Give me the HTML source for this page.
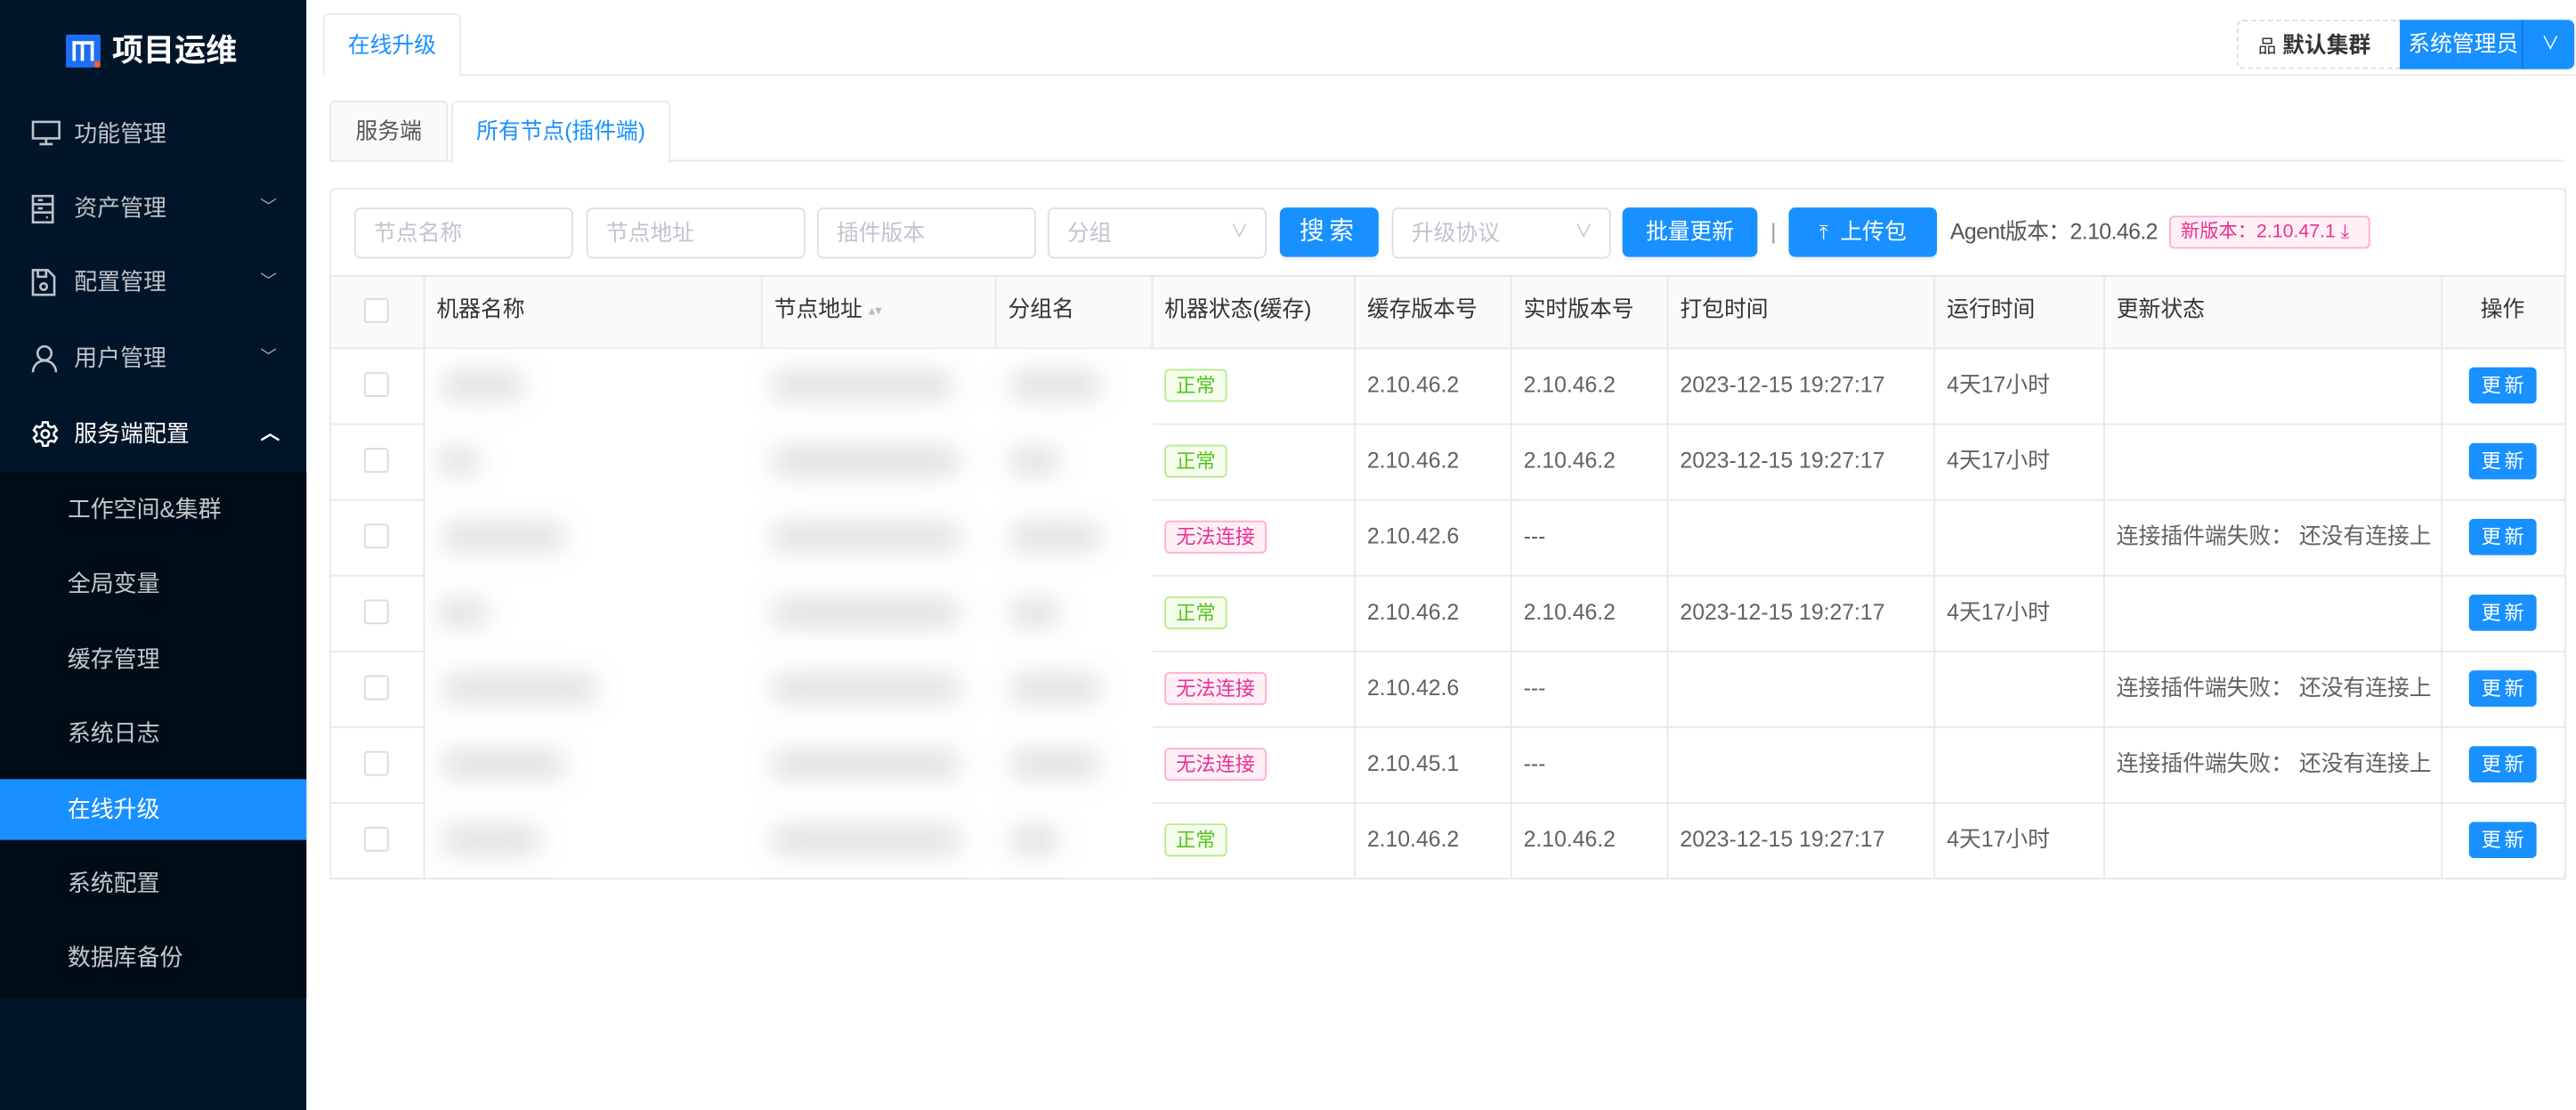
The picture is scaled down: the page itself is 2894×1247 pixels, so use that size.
<!DOCTYPE html>
<html><head><meta charset="utf-8"><style>
*{box-sizing:border-box;margin:0;padding:0}
html,body{width:2894px;height:1246px;overflow:hidden;background:#fff}
#w{position:absolute;left:0;top:0;width:1564px;height:674px;transform:scale(1.8504);transform-origin:0 0;font-family:"Liberation Sans","Noto Sans CJK SC",sans-serif;font-size:13.4px;color:#606266}
.a{position:absolute}
.side{left:0;top:0;width:186px;height:674px;background:#001529}
.mi{position:absolute;left:0;width:186px;height:45px;line-height:45px;color:#bfc4ca;font-size:14px}
.mi .t{position:absolute;left:45px}
.mi svg{position:absolute;left:19px;top:14px}
.mi .ch{position:absolute;left:158px;top:0;color:#aab;font-size:10px}
.sub{position:absolute;left:0;width:186px;height:45.5px;line-height:45px;color:#c5c9ce;padding-left:41px;background:#000c17;font-size:14px}
.inp{position:absolute;top:126px;height:31px;border:1px solid #dcdfe6;border-radius:4px;color:#c0c4cc;line-height:29px;padding-left:11px;background:#fff}
.btn{position:absolute;top:126px;height:30px;background:#1890ff;color:#fff;border-radius:4px;text-align:center;line-height:30px;box-shadow:0 2px 0 rgba(0,0,0,.05)}
.hl{position:absolute;height:1px;background:#e8e8e8}
.vl{position:absolute;width:1px;background:#e8e8e8}
.c{position:absolute;line-height:20px}
.tag{position:absolute;height:20px;line-height:18px;font-size:12px;border-radius:3px;padding:0 6px}
.ok{color:#52c41a;background:#f6ffed;border:1px solid #b7eb8f}
.bad{color:#eb2f96;background:#fff0f6;border:1px solid #ffadd2}
.cb{position:absolute;left:221px;width:15px;height:15px;border:1px solid #d9d9d9;border-radius:2px;background:#fff}
.up{position:absolute;left:1499px;width:41px;height:22px;background:#1890ff;color:#fff;border-radius:3px;font-size:12px;line-height:22px;text-align:center;letter-spacing:2px;padding-left:2px}
.blob{position:absolute;background:#d8d8d8;filter:blur(8px);border-radius:10px}
</style></head><body><div id="w">
<div class="a side">
 <div class="a" style="left:40px;top:21px;width:21px;height:20px;background:#1d6ef5;border-radius:1px"></div>
 <div class="a" style="left:44px;top:25px;width:13px;height:12px;border:2px solid #fff;border-bottom:none"></div>
 <div class="a" style="left:49px;top:27px;width:2px;height:10px;background:#fff"></div>
 <div class="a" style="left:57px;top:37px;width:4px;height:4px;background:#ff5a1f;border-radius:50%"></div>
 <div class="a" style="left:68px;top:19px;color:#fff;font-size:19px;font-weight:bold;line-height:26px">项目运维</div>
 <div class="mi" style="top:59px"><svg width="18" height="16" viewBox="0 0 18 16" fill="none" stroke="#bfc4ca" stroke-width="1.4"><rect x="1" y="1" width="16" height="10"/><path d="M9 11v3M5 14.5h8"/></svg><span class="t">功能管理</span></div>
 <div class="mi" style="top:104px"><svg width="14" height="18" viewBox="0 0 14 18" fill="none" stroke="#bfc4ca" stroke-width="1.4"><rect x="1" y="1" width="12" height="16"/><path d="M1 6h12M1 11h12M4 3.5h3M4 8.5h3M9 14h1"/></svg><span class="t">资产管理</span><span class="ch">﹀</span></div>
 <div class="mi" style="top:149px"><svg width="15" height="17" viewBox="0 0 15 17" fill="none" stroke="#bfc4ca" stroke-width="1.4"><path d="M1 1h9l4 4v11H1z"/><path d="M4 1v4h5V1"/><circle cx="7.5" cy="11" r="2"/></svg><span class="t">配置管理</span><span class="ch">﹀</span></div>
 <div class="mi" style="top:195px"><svg width="16" height="18" viewBox="0 0 16 18" fill="none" stroke="#bfc4ca" stroke-width="1.4"><circle cx="8" cy="5.5" r="4.2"/><path d="M1 17c0-4 3-7 7-7s7 3 7 7"/></svg><span class="t">用户管理</span><span class="ch">﹀</span></div>
 <div class="mi" style="top:241px;color:#fff"><svg width="17" height="17" viewBox="0 0 24 24" fill="none" stroke="#fff" stroke-width="2"><circle cx="12" cy="12" r="3.2"/><path d="M10 2h4l.6 3 2.3 1.3 2.9-1 2 3.5-2.3 2v2.4l2.3 2-2 3.5-2.9-1-2.3 1.3-.6 3h-4l-.6-3-2.3-1.3-2.9 1-2-3.5 2.3-2v-2.4l-2.3-2 2-3.5 2.9 1L9.4 5z"/></svg><span class="t">服务端配置</span><span class="ch" style="color:#fff;font-size:12px;font-weight:bold">︿</span></div>
 <div class="sub" style="top:287px">工作空间&amp;集群</div>
 <div class="sub" style="top:332px">全局变量</div>
 <div class="sub" style="top:378px">缓存管理</div>
 <div class="sub" style="top:423px">系统日志</div>
 <div class="sub" style="top:473px;height:37px;line-height:37px;background:#1890ff;color:#fff">在线升级</div>
 <div class="sub" style="top:469px;height:4px"></div>
 <div class="sub" style="top:514px">系统配置</div>
 <div class="sub" style="top:510px;height:4px"></div>
 <div class="sub" style="top:559px;height:47px">数据库备份</div>
</div>
<div class="hl" style="left:196px;top:45px;width:1368px"></div>
<div class="a" style="left:196px;top:8px;width:84px;height:38px;border:1px solid #e4e7ed;border-bottom:none;border-radius:4px 4px 0 0;background:#fff;color:#1890ff;text-align:center;line-height:37px">在线升级</div>
<div class="a" style="left:1358px;top:12px;width:99px;height:30px;border:1px dashed #d9d9d9;border-right:none;border-radius:4px 0 0 4px;line-height:29px;color:#333;font-weight:bold;padding-left:12px"><span style="font-size:11px;font-weight:normal">品</span> 默认集群</div>
<div class="a" style="left:1457px;top:12px;width:106px;height:30px;background:#1890ff;border-radius:0 4px 4px 0;color:#fff;line-height:30px;padding-left:5px">系统管理员<span style="position:absolute;left:74px;top:0;width:1px;height:30px;background:#0f7ae5"></span><span style="position:absolute;left:86px;font-size:11px">∨</span></div>
<div class="hl" style="left:200px;top:97px;width:1357px"></div>
<div class="a" style="left:200px;top:61px;width:72px;height:37px;border:1px solid #e8e8e8;background:#fafafa;border-radius:4px 4px 0 0;text-align:center;line-height:35px;color:#555">服务端</div>
<div class="a" style="left:274px;top:61px;width:133px;height:38px;border:1px solid #e8e8e8;border-bottom:none;background:#fff;border-radius:4px 4px 0 0;text-align:center;line-height:35px;color:#1890ff">所有节点(插件端)</div>
<div class="a" style="left:200px;top:114px;width:1358px;height:420px;border:1px solid #e8e8e8;border-radius:4px;border-bottom:none"></div>
<div class="inp" style="left:215px;width:133px">节点名称</div>
<div class="inp" style="left:356px;width:133px">节点地址</div>
<div class="inp" style="left:496px;width:133px">插件版本</div>
<div class="inp" style="left:636px;width:133px">分组<span style="position:absolute;left:110px;font-size:11px">∨</span></div>
<div class="btn" style="left:777px;width:60px;font-size:15px;letter-spacing:3px">搜索</div>
<div class="inp" style="left:845px;width:133px">升级协议<span style="position:absolute;left:110px;font-size:11px">∨</span></div>
<div class="btn" style="left:985px;width:82px">批量更新</div>
<div class="a" style="left:1075px;top:131px;color:#999;line-height:20px">|</div>
<div class="btn" style="left:1086px;width:90px"><span style="font-size:12px">⤒</span>&nbsp; 上传包</div>
<div class="a" style="left:1184px;top:131px;line-height:20px;color:#555;letter-spacing:-0.3px">Agent版本：2.10.46.2</div>
<div class="a" style="left:1317px;top:131px;height:20px;line-height:18px;width:122px;font-size:11.5px;color:#eb2f96;background:#fff0f6;border:1px solid #ffadd2;border-radius:3px;padding-left:6px">新版本：2.10.47.1 ⤓</div>
<div class="a" style="left:201px;top:167px;width:1356px;height:44px;background:#fafafa"></div>
<div class="hl" style="left:200px;top:167px;width:1357px"></div>
<div class="hl" style="left:200px;top:211px;width:1357px"></div>
<div class="vl" style="left:257px;top:167px;height:367px"></div>
<div class="vl" style="left:462px;top:167px;height:44px"></div>
<div class="vl" style="left:604px;top:167px;height:44px"></div>
<div class="vl" style="left:699px;top:167px;height:44px"></div>
<div class="vl" style="left:822px;top:167px;height:367px"></div>
<div class="vl" style="left:917px;top:167px;height:367px"></div>
<div class="vl" style="left:1012px;top:167px;height:367px"></div>
<div class="vl" style="left:1174px;top:167px;height:367px"></div>
<div class="vl" style="left:1277px;top:167px;height:367px"></div>
<div class="vl" style="left:1482px;top:167px;height:367px"></div>
<div class="vl" style="left:1557px;top:114px;height:420px"></div>
<div class="cb" style="top:181px"></div>
<div class="c" style="left:265px;top:178px;color:#333">机器名称</div>
<div class="c" style="left:470px;top:178px;color:#333">节点地址 <span style="font-size:8px;color:#bbb;position:relative;top:-1px">▴▾</span></div>
<div class="c" style="left:612px;top:178px;color:#333">分组名</div>
<div class="c" style="left:707px;top:178px;color:#333">机器状态(缓存)</div>
<div class="c" style="left:830px;top:178px;color:#333">缓存版本号</div>
<div class="c" style="left:925px;top:178px;color:#333">实时版本号</div>
<div class="c" style="left:1020px;top:178px;color:#333">打包时间</div>
<div class="c" style="left:1182px;top:178px;color:#333">运行时间</div>
<div class="c" style="left:1285px;top:178px;color:#333">更新状态</div>
<div class="c" style="left:1506px;top:178px;color:#333">操作</div>
<div class="hl" style="left:200px;top:257px;width:1357px"></div>
<div class="hl" style="left:200px;top:303px;width:1357px"></div>
<div class="hl" style="left:200px;top:349px;width:1357px"></div>
<div class="hl" style="left:200px;top:395px;width:1357px"></div>
<div class="hl" style="left:200px;top:441px;width:1357px"></div>
<div class="hl" style="left:200px;top:487px;width:1357px"></div>
<div class="hl" style="left:200px;top:533px;width:1357px"></div>
<div class="a" style="left:258px;top:212px;width:442px;height:321px;background:#fff;overflow:hidden">
 <div class="blob" style="left:10px;top:15px;width:50px;height:14px"></div>
 <div class="blob" style="left:210px;top:15px;width:110px;height:14px"></div>
 <div class="blob" style="left:355px;top:15px;width:55px;height:14px"></div>
 <div class="blob" style="left:8px;top:61px;width:25px;height:14px"></div>
 <div class="blob" style="left:210px;top:61px;width:115px;height:14px"></div>
 <div class="blob" style="left:355px;top:61px;width:30px;height:14px"></div>
 <div class="blob" style="left:10px;top:107px;width:75px;height:14px"></div>
 <div class="blob" style="left:210px;top:107px;width:115px;height:14px"></div>
 <div class="blob" style="left:355px;top:107px;width:55px;height:14px"></div>
 <div class="blob" style="left:8px;top:153px;width:30px;height:14px"></div>
 <div class="blob" style="left:210px;top:153px;width:115px;height:14px"></div>
 <div class="blob" style="left:355px;top:153px;width:30px;height:14px"></div>
 <div class="blob" style="left:10px;top:199px;width:95px;height:14px"></div>
 <div class="blob" style="left:210px;top:199px;width:115px;height:14px"></div>
 <div class="blob" style="left:355px;top:199px;width:55px;height:14px"></div>
 <div class="blob" style="left:10px;top:245px;width:75px;height:14px"></div>
 <div class="blob" style="left:210px;top:245px;width:115px;height:14px"></div>
 <div class="blob" style="left:355px;top:245px;width:55px;height:14px"></div>
 <div class="blob" style="left:10px;top:291px;width:60px;height:14px"></div>
 <div class="blob" style="left:210px;top:291px;width:115px;height:14px"></div>
 <div class="blob" style="left:355px;top:291px;width:30px;height:14px"></div>
</div>
<div class="cb" style="top:226px"></div><div class="tag ok" style="left:707px;top:224px">正常</div><div class="c" style="left:830px;top:224px">2.10.46.2</div><div class="c" style="left:925px;top:224px">2.10.46.2</div><div class="c" style="left:1020px;top:224px">2023-12-15 19:27:17</div><div class="c" style="left:1182px;top:224px">4天17小时</div><div class="up" style="top:223px">更新</div>
<div class="cb" style="top:272px"></div><div class="tag ok" style="left:707px;top:270px">正常</div><div class="c" style="left:830px;top:270px">2.10.46.2</div><div class="c" style="left:925px;top:270px">2.10.46.2</div><div class="c" style="left:1020px;top:270px">2023-12-15 19:27:17</div><div class="c" style="left:1182px;top:270px">4天17小时</div><div class="up" style="top:269px">更新</div>
<div class="cb" style="top:318px"></div><div class="tag bad" style="left:707px;top:316px">无法连接</div><div class="c" style="left:830px;top:316px">2.10.42.6</div><div class="c" style="left:925px;top:316px">---</div><div class="c" style="left:1285px;top:316px">连接插件端失败： 还没有连接上</div><div class="up" style="top:315px">更新</div>
<div class="cb" style="top:364px"></div><div class="tag ok" style="left:707px;top:362px">正常</div><div class="c" style="left:830px;top:362px">2.10.46.2</div><div class="c" style="left:925px;top:362px">2.10.46.2</div><div class="c" style="left:1020px;top:362px">2023-12-15 19:27:17</div><div class="c" style="left:1182px;top:362px">4天17小时</div><div class="up" style="top:361px">更新</div>
<div class="cb" style="top:410px"></div><div class="tag bad" style="left:707px;top:408px">无法连接</div><div class="c" style="left:830px;top:408px">2.10.42.6</div><div class="c" style="left:925px;top:408px">---</div><div class="c" style="left:1285px;top:408px">连接插件端失败： 还没有连接上</div><div class="up" style="top:407px">更新</div>
<div class="cb" style="top:456px"></div><div class="tag bad" style="left:707px;top:454px">无法连接</div><div class="c" style="left:830px;top:454px">2.10.45.1</div><div class="c" style="left:925px;top:454px">---</div><div class="c" style="left:1285px;top:454px">连接插件端失败： 还没有连接上</div><div class="up" style="top:453px">更新</div>
<div class="cb" style="top:502px"></div><div class="tag ok" style="left:707px;top:500px">正常</div><div class="c" style="left:830px;top:500px">2.10.46.2</div><div class="c" style="left:925px;top:500px">2.10.46.2</div><div class="c" style="left:1020px;top:500px">2023-12-15 19:27:17</div><div class="c" style="left:1182px;top:500px">4天17小时</div><div class="up" style="top:499px">更新</div>
</div></body></html>
